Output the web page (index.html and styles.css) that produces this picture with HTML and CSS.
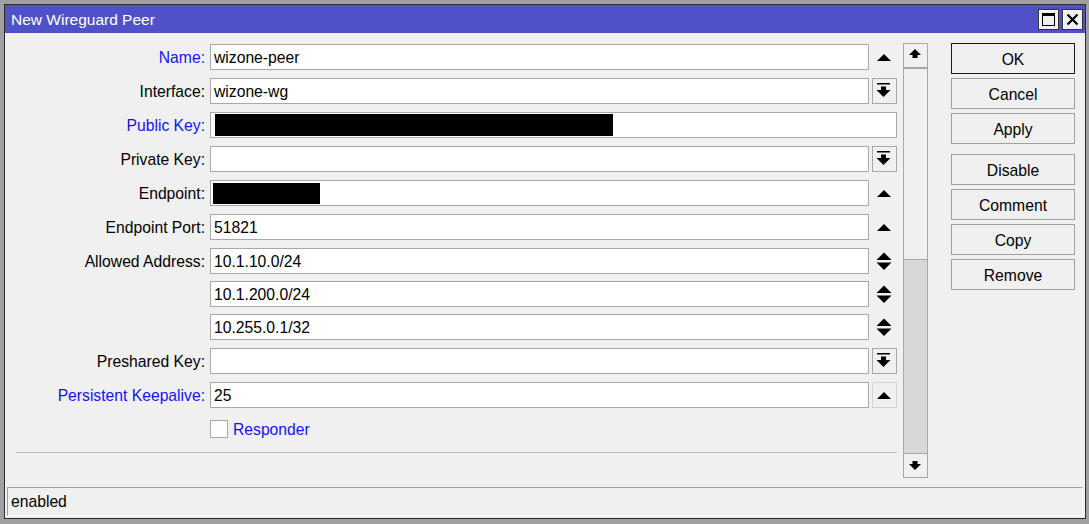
FILE: index.html
```html
<!DOCTYPE html>
<html>
<head>
<meta charset="utf-8">
<link rel="stylesheet" href="styles.css">
</head>
<body>
<div class="window">
  <div class="titlebar">
    <span class="title">New Wireguard Peer</span>
    <div class="tb-btns">
      <div class="tb-btn"><svg width="19" height="19" viewBox="0 0 19 19"><rect x="3.5" y="3.5" width="12" height="12" fill="none" stroke="#000"/><rect x="3" y="3" width="13" height="3" fill="#000"/></svg></div>
      <div class="tb-btn"><svg width="19" height="19" viewBox="0 0 19 19"><path d="M4.5 4.5L14.5 14.5M14.5 4.5L4.5 14.5" stroke="#000" stroke-width="2.2" fill="none"/></svg></div>
    </div>
  </div>
  <div class="content">
    <div class="form-area">
      <div class="form">
        <div class="row">
          <span class="lbl blue">Name:</span>
          <div class="input">wizone-peer</div>
          <div class="cell"><svg width="25" height="26" viewBox="0 0 25 26"><path d="M5 17H19L12 10Z"/></svg></div>
        </div>
        <div class="row">
          <span class="lbl">Interface:</span>
          <div class="input">wizone-wg</div>
          <div class="cell btn"><svg width="23" height="24" viewBox="0 0 23 24"><rect x="4" y="4" width="13" height="1.5"/><rect x="8" y="7.5" width="5" height="4"/><path d="M3.5 11H17.5L10.5 18Z"/></svg></div>
        </div>
        <div class="row">
          <span class="lbl blue">Public Key:</span>
          <div class="input wide"><span class="redact r1"></span></div>
        </div>
        <div class="row">
          <span class="lbl">Private Key:</span>
          <div class="input"></div>
          <div class="cell btn"><svg width="23" height="24" viewBox="0 0 23 24"><rect x="4" y="4" width="13" height="1.5"/><rect x="8" y="7.5" width="5" height="4"/><path d="M3.5 11H17.5L10.5 18Z"/></svg></div>
        </div>
        <div class="row">
          <span class="lbl">Endpoint:</span>
          <div class="input"><span class="redact r2"></span></div>
          <div class="cell"><svg width="25" height="26" viewBox="0 0 25 26"><path d="M5 17H19L12 10Z"/></svg></div>
        </div>
        <div class="row">
          <span class="lbl">Endpoint Port:</span>
          <div class="input">51821</div>
          <div class="cell"><svg width="25" height="26" viewBox="0 0 25 26"><path d="M5 17H19L12 10Z"/></svg></div>
        </div>
        <div class="row">
          <span class="lbl">Allowed Address:</span>
          <div class="input">10.1.10.0/24</div>
          <div class="cell"><svg width="25" height="26" viewBox="0 0 25 26"><path d="M4.5 12H19.5L12 4.5Z"/><path d="M4.5 14.5H19.5L12 22Z"/></svg></div>
        </div>
        <div class="row tight">
          <span class="lbl"></span>
          <div class="input">10.1.200.0/24</div>
          <div class="cell"><svg width="25" height="26" viewBox="0 0 25 26"><path d="M4.5 12H19.5L12 4.5Z"/><path d="M4.5 14.5H19.5L12 22Z"/></svg></div>
        </div>
        <div class="row tight">
          <span class="lbl"></span>
          <div class="input">10.255.0.1/32</div>
          <div class="cell"><svg width="25" height="26" viewBox="0 0 25 26"><path d="M4.5 12H19.5L12 4.5Z"/><path d="M4.5 14.5H19.5L12 22Z"/></svg></div>
        </div>
        <div class="row">
          <span class="lbl">Preshared Key:</span>
          <div class="input"></div>
          <div class="cell btn"><svg width="23" height="24" viewBox="0 0 23 24"><rect x="4" y="4" width="13" height="1.5"/><rect x="8" y="7.5" width="5" height="4"/><path d="M3.5 11H17.5L10.5 18Z"/></svg></div>
        </div>
        <div class="row">
          <span class="lbl blue">Persistent Keepalive:</span>
          <div class="input">25</div>
          <div class="cell btn plain"><svg width="23" height="24" viewBox="0 0 23 24"><path d="M4 16H18L11 9Z"/></svg></div>
        </div>
        <div class="row">
          <span class="lbl"></span>
          <span class="check"></span>
          <span class="check-label blue">Responder</span>
        </div>
      </div>
      <div class="sep"></div>
    </div>
    <div class="scrollbar">
      <div class="sb-btn"><svg width="23" height="23" viewBox="0 0 23 23"><path d="M5 11H17L11 5Z"/><rect x="8.5" y="11" width="5" height="3"/></svg></div>
      <div class="sb-thumb"></div>
      <div class="sb-track"></div>
      <div class="sb-btn"><svg width="23" height="23" viewBox="0 0 23 23"><rect x="8.5" y="7" width="5" height="3"/><path d="M5 10H17L11 16Z"/></svg></div>
    </div>
    <div class="actions">
      <div class="abtn default">OK</div>
      <div class="abtn">Cancel</div>
      <div class="abtn">Apply</div>
      <div class="abtn group">Disable</div>
      <div class="abtn">Comment</div>
      <div class="abtn">Copy</div>
      <div class="abtn">Remove</div>
    </div>
  </div>
  <div class="status">enabled</div>
</div>
</body>
</html>
```

FILE: styles.css
```css
* { box-sizing: border-box; }
html, body { margin: 0; padding: 0; }
body {
  background: #a0a0a0;
  font-family: "Liberation Sans", Arial, sans-serif;
  font-size: 15.7px;
  color: #000;
  width: 1089px;
  height: 524px;
  overflow: hidden;
}
.window {
  margin: 4px 0 0 4px;
  width: 1082px;
  height: 515px;
  border: 1px solid #2c2c2c;
  background: #f0f0f0;
  display: flex;
  flex-direction: column;
}
.titlebar {
  height: 28px;
  background: #5050c8;
  display: flex;
  align-items: center;
  justify-content: space-between;
  padding: 0 2px 0 6px;
}
.title {
  color: #fff;
  font-size: 15.5px;
  padding-top: 2px;
}
.tb-btns { display: flex; gap: 3px; align-items: center; }
.tb-btn {
  width: 21px;
  height: 21px;
  border: 1px solid #333;
  background: #f0f0f0;
  box-shadow: inset 1px 1px 0 #fff;
}
.tb-btn svg { display: block; }
.content {
  height: 454px;
  display: flex;
  padding-top: 10px;
}
.form-area { width: 892px; }
.form { padding-top: 1px; }
.row {
  display: flex;
  align-items: center;
  height: 26px;
  margin-top: 8px;
}
.row:first-child { margin-top: 0; }
.row.tight { margin-top: 7px; }
.lbl {
  width: 200px;
  margin-right: 5px;
  text-align: right;
  white-space: nowrap;
  padding-top: 2px;
}
.blue { color: #1414f0; }
.input {
  width: 659px;
  height: 26px;
  background: #fff;
  border: 1px solid #a8a8a8;
  padding: 1px 0 0 3px;
  line-height: 24px;
  position: relative;
}
.input.wide { width: 687px; }
.redact {
  display: block;
  position: absolute;
  background: #000;
}
.r1 { left: 4px; top: 1px; width: 398px; height: 22px; }
.r2 { left: 2px; top: 2px; width: 107px; height: 21px; }
.cell {
  width: 25px;
  height: 26px;
  margin-left: 3px;
}
.cell svg { display: block; }
.cell.btn {
  border: 1px solid #a8a8a8;
  background: #f0f0f0;
}
.cell.btn.plain { border-color: #d4d4d4; }
.check {
  width: 18px;
  height: 18px;
  background: #fff;
  border: 1px solid #a8a8a8;
}
.check-label { margin-left: 5px; padding-top: 2px; }
.sep {
  margin: 10px 0 0 11px;
  width: 881px;
  height: 1px;
  background: #bcbcbc;
}
.scrollbar {
  margin-left: 6px;
  width: 25px;
  height: 435px;
  display: flex;
  flex-direction: column;
}
.sb-btn {
  height: 25px;
  border: 1px solid #a8a8a8;
  background: #f0f0f0;
}
.sb-btn svg { display: block; }
.sb-thumb {
  height: 192px;
  border: 1px solid #a8a8a8;
  background: #f0f0f0;
}
.sb-track {
  height: 193px;
  border-left: 1px solid #a8a8a8;
  border-right: 1px solid #a8a8a8;
  background: #d8d8d8;
}
.actions {
  margin-left: 23px;
  width: 124px;
  display: flex;
  flex-direction: column;
}
.abtn {
  height: 31px;
  margin-top: 4px;
  border: 1px solid #a0a0a0;
  background: #f0f0f0;
  text-align: center;
  line-height: 30px;
  padding-top: 1px;
}
.abtn:first-child { margin-top: 0; }
.abtn.default { border-color: #1a1a1a; }
.abtn.group { margin-top: 10px; }
.status {
  margin: 0 2px;
  height: 29px;
  border-top: 1px solid #a0a0a0;
  border-left: 1px solid #a0a0a0;
  border-bottom: 1px solid #fff;
  border-right: 1px solid #fff;
  padding-left: 3px;
  line-height: 27px;
}
```
